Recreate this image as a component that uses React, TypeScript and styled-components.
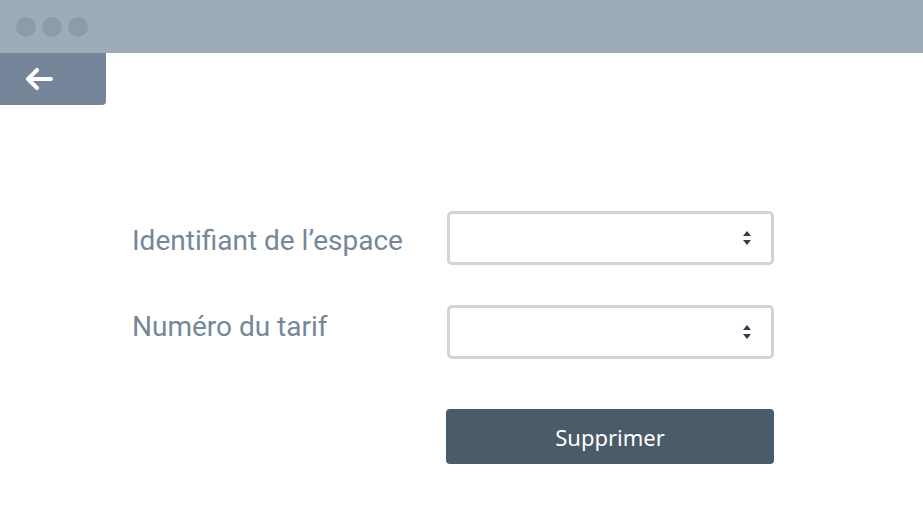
import React from "react";
import styled, { createGlobalStyle } from "styled-components";

const Global = createGlobalStyle`
  html, body { margin: 0; padding: 0; background: #ffffff; }
  body { font-family: Roboto, "Noto Sans", sans-serif; }
  * { box-sizing: border-box; }
`;

const Page = styled.div`
  width: 923px;
  height: 527px;
  background: #ffffff;
  display: flex;
  flex-direction: column;
  overflow: hidden;
`;

const TopBar = styled.div`
  height: 53px;
  background: #9eacb9;
  display: flex;
  align-items: center;
  gap: 6px;
  padding-left: 16px;
`;

const Dot = styled.span`
  width: 20px;
  height: 20px;
  border-radius: 50%;
  background: #8e9caa;
`;

const BackTab = styled.button`
  width: 106px;
  height: 52px;
  background: #76859a;
  border: none;
  border-bottom-right-radius: 4px;
  display: flex;
  align-items: center;
  padding: 0 0 0 25px;
  cursor: pointer;
`;

const Form = styled.div`
  margin-top: 106px;
  padding-left: 132px;
  display: grid;
  grid-template-columns: 315px 327px;
  row-gap: 40px;
`;

const Label = styled.label<{ $top: number }>`
  align-self: start;
  padding-top: ${(p) => p.$top}px;
  font-family: Roboto, sans-serif;
  font-size: 28px;
  color: #76879a;
  line-height: 1;
`;

const SelectBox = styled.div`
  height: 54px;
  border: 3px solid #cdd5db;
  border-radius: 5px;
  display: flex;
  align-items: center;
  justify-content: flex-end;
  padding-right: 19px;
`;

const ButtonRow = styled.div`
  grid-column: 2;
  margin-top: 10px;
`;

const Button = styled.button`
  width: 328px;
  height: 55px;
  margin-left: -1px;
  background: #4a5b6a;
  color: #ffffff;
  border: none;
  border-radius: 4px;
  font-family: "Noto Sans", sans-serif;
  font-size: 22px;
  font-weight: 400;
  cursor: pointer;
`;

const Arrow = () => (
  <svg width="28" height="22" viewBox="0 0 28 22" fill="none">
    <path d="M3 11H26M12 2L3 11L12 20" stroke="#fff" strokeWidth="4" strokeLinecap="round" strokeLinejoin="round" />
  </svg>
);

const Caret = () => (
  <svg width="10" height="16" viewBox="0 0 10 16">
    <path d="M5 1L9 6H1Z" fill="#2f3e4c" />
    <path d="M5 15L9 10H1Z" fill="#2f3e4c" />
  </svg>
);

export default function App() {
  return (
    <Page>
      <Global />
      <TopBar>
        <Dot />
        <Dot />
        <Dot />
      </TopBar>
      <BackTab aria-label="Retour">
        <Arrow />
      </BackTab>
      <Form>
        <Label $top={16}>Identifiant de l’espace</Label>
        <SelectBox>
          <Caret />
        </SelectBox>
        <Label $top={8}>Numéro du tarif</Label>
        <SelectBox>
          <Caret />
        </SelectBox>
        <ButtonRow>
          <Button>Supprimer</Button>
        </ButtonRow>
      </Form>
    </Page>
  );
}
